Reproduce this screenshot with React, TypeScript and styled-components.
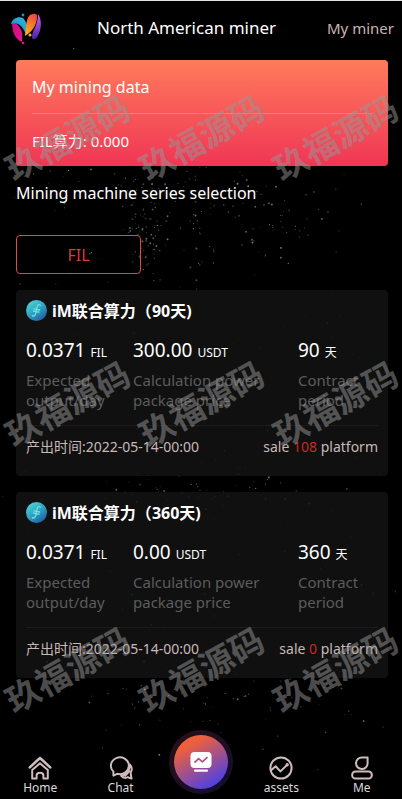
import React from "react";
import styled, { createGlobalStyle } from "styled-components";

const GlobalStyle = createGlobalStyle`
  *, *::before, *::after { box-sizing: border-box; }
  body {
    margin: 0;
    background: #000;
    color: #fff;
    font-family: "Noto Sans", "Noto Sans CJK SC", sans-serif;
  }
  h1, h2, h3, p, dl, dd, dt { margin: 0; font-weight: 400; }
  button { font-family: inherit; }
`;

const Page = styled.div`
  position: relative;
  min-height: 100vh;
  display: flex;
  flex-direction: column;
  overflow: hidden;
  border-top: 1px solid #dfe3e2;
  isolation: isolate;
`;

const Sky = styled.svg`
  position: absolute;
  inset: 0;
  width: 100%;
  height: 100%;
  z-index: -1;
`;

const Header = styled.header`
  display: flex;
  justify-content: space-between;
  align-items: center;
  height: 55px;
  padding: 0 8px 2px 6px;
`;

const HeaderTitle = styled.h1`
  font-size: 17px;
  line-height: 24px;
  white-space: nowrap;
`;

const HeaderLink = styled.a`
  color: #c8b4b4;
  font-size: 15px;
  line-height: 24px;
  text-decoration: none;
  white-space: nowrap;
`;

const Main = styled.main`
  display: flex;
  flex-direction: column;
  padding: 4px 14px 24px 16px;
`;

const DataCard = styled.section`
  height: 106px;
  padding: 0 16px;
  border-radius: 4px;
  background: linear-gradient(180deg, #ff7a5c, #f03655);
`;

const DataTitle = styled.h2`
  height: 54px;
  border-bottom: 1px solid rgba(255, 255, 255, 0.2);
  font-size: 16px;
  line-height: 54px;
`;

const DataValue = styled.p`
  font-size: 15px;
  line-height: 54px;
`;

const SectionTitle = styled.h2`
  margin-top: 15px;
  font-size: 16px;
  line-height: 24px;
`;

const SeriesButton = styled.button`
  align-self: flex-start;
  width: 125px;
  height: 39px;
  margin: 30px 0 16px;
  border: 1px solid #e04a3c;
  border-radius: 4px;
  background: transparent;
  color: #d93c32;
  font-size: 16px;
`;

const CardList = styled.div`
  display: grid;
  gap: 16px;
`;

const Card = styled.article`
  padding: 8px 10px 19px;
  border-radius: 4px;
  background: rgba(19, 19, 19, 0.85);
`;

const CardHead = styled.header`
  display: flex;
  align-items: center;
  gap: 5px;
  height: 25px;
`;

const CardTitle = styled.h3`
  font-size: 16px;
  font-weight: 700;
  line-height: 24px;
`;

const Stats = styled.dl`
  display: grid;
  grid-template-columns: 107px 165px 1fr;
  padding: 14px 0 15px;
  border-bottom: 1px solid #1c1c1c;
`;

const Stat = styled.div`
  display: flex;
  flex-direction: column-reverse;
  justify-content: flex-end;
`;

const StatValue = styled.dd`
  font-size: 19px;
  line-height: 26px;
  white-space: nowrap;
`;

const Unit = styled.small`
  font-size: 12px;
`;

const StatLabel = styled.dt`
  max-width: 140px;
  padding-top: 4px;
  color: #5c5c5c;
  font-size: 15px;
  line-height: 20px;
`;

const CardFoot = styled.footer`
  display: flex;
  justify-content: space-between;
  padding-top: 11px;
  color: #c8b9b9;
  font-size: 14px;
  line-height: 20px;
`;

const Sold = styled.span`
  color: #c92a22;
`;

const TabBar = styled.nav`
  display: grid;
  grid-template-columns: repeat(5, 1fr);
  align-items: end;
  height: 72px;
  margin-top: auto;
  padding-bottom: 3px;
`;

const Tab = styled.a`
  display: flex;
  flex-direction: column;
  align-items: center;
  color: #cfbcbc;
  font-size: 12px;
  line-height: 16px;
  text-decoration: none;
`;

const TabLabel = styled.span`
  color: #dcd8dc;
`;

const MinerTab = styled.a`
  justify-self: center;
  display: grid;
  place-items: center;
  width: 64px;
  height: 64px;
  margin-bottom: 2px;
  border-radius: 50%;
  background: linear-gradient(135deg, #2a1014, #100e30);
`;

const MinerDisc = styled.span`
  display: grid;
  place-items: center;
  width: 54px;
  height: 54px;
  border-radius: 50%;
  background: linear-gradient(150deg, #ee5f3c 22%, #4a40e8 88%);
`;

const Watermarks = styled.div`
  position: absolute;
  inset: 3px 0 0;
  display: grid;
  grid-template-columns: repeat(3, 134px);
  grid-auto-rows: 266px;
  pointer-events: none;
`;

const Mark = styled.span`
  display: grid;
  place-content: center;
  transform: rotate(-29deg);
  color: rgba(150, 150, 150, 0.5);
  font-family: "Noto Sans CJK SC", sans-serif;
  font-size: 34px;
  font-weight: 700;
  line-height: 50px;
  white-space: nowrap;
`;

type Star = { x: number; y: number; r: number; o: number };

function makeStars(): Star[] {
  let seed = 71;
  const rnd = () => {
    seed = (seed * 16807) % 2147483647;
    return seed / 2147483647;
  };
  const stars: Star[] = [];
  const scatter = (n: number, x: number, y: number, w: number, h: number) => {
    for (let i = 0; i < n; i++) {
      stars.push({
        x: x + (rnd() + rnd() - 1) * w,
        y: y + (rnd() + rnd() - 1) * h,
        r: rnd() > 0.8 ? 1 : 0.6,
        o: 0.15 + rnd() * 0.5,
      });
    }
  };
  scatter(280, 50, 52, 60, 50);
  scatter(70, 36, 30, 6, 6);
  scatter(90, 58, 28, 30, 6);
  scatter(60, 35, 23, 35, 4);
  scatter(50, 50, 62, 50, 4);
  scatter(60, 50, 87, 50, 6);
  return stars;
}

const STARS = makeStars();

const Starfield = () => (
  <Sky aria-hidden="true">
    {STARS.map((s, i) => (
      <circle key={i} cx={`${s.x}%`} cy={`${s.y}%`} r={s.r} fill="#b4c2c0" opacity={s.o} />
    ))}
  </Sky>
);

const Logo = () => (
  <svg width="40" height="40" viewBox="0 0 40 40" role="img" aria-label="Logo">
    <defs>
      <linearGradient id="lgBlue" x1="0" y1="1" x2="1" y2="0">
        <stop offset="0" stopColor="#1c7fc0" />
        <stop offset="1" stopColor="#2bc0e4" />
      </linearGradient>
      <linearGradient id="lgPink" x1="0" y1="0" x2="1" y2="1">
        <stop offset="0" stopColor="#c40c86" />
        <stop offset="1" stopColor="#f0128c" />
      </linearGradient>
      <linearGradient id="lgOrange" x1="0.6" y1="0" x2="0.3" y2="1">
        <stop offset="0" stopColor="#ef4b3b" />
        <stop offset="1" stopColor="#fdb515" />
      </linearGradient>
      <linearGradient id="lgViolet" x1="0.5" y1="0" x2="0.5" y2="1">
        <stop offset="0" stopColor="#d266e8" />
        <stop offset="1" stopColor="#4a1fb0" />
      </linearGradient>
    </defs>
    <path d="M6 14 C6 24 9 31 16 34 C16 28 17 24 14 20 C12 16 9 14 6 14 Z" fill="url(#lgPink)" />
    <path d="M5 16 C6 11 12 8 17 10 C20 13 21 17 22 21 L20 26 C17 20 13 13 5 16 Z" fill="url(#lgBlue)" />
    <path d="M23 8 C26 5 32 5 31 9 C31 16 27 23 19 28 C20 20 20 12 23 8 Z" fill="url(#lgOrange)" />
    <path d="M32 6 C36 11 36 22 31 29 C29 32 26 32 26 29 C26 22 32 18 32 6 Z" fill="url(#lgViolet)" />
    <circle cx="17" cy="7" r="1.4" fill="#2092b8" />
    <circle cx="24" cy="27" r="1.5" fill="#fdb515" />
    <circle cx="17" cy="35" r="1.3" fill="#e0128c" />
  </svg>
);

const FilIcon = () => (
  <svg width="21" height="21" viewBox="0 0 21 21" aria-hidden="true">
    <defs>
      <linearGradient id="fil" x1="0.1" y1="0" x2="0.8" y2="1">
        <stop offset="0" stopColor="#52dad8" />
        <stop offset="0.55" stopColor="#2e9dc0" />
        <stop offset="1" stopColor="#2058a0" />
      </linearGradient>
    </defs>
    <circle cx="10.5" cy="10.5" r="10.5" fill="url(#fil)" />
    <path
      d="M14.5 5.2 C12.6 4 11.4 5 11 7.4 L9.8 13.2 C9.3 15.7 8 16.6 6.3 15.6 M8 8.8 L13.6 10 M7.4 11 L13 12.2"
      fill="none"
      stroke="#68e4e2"
      strokeWidth="1.3"
      strokeLinecap="round"
    />
  </svg>
);

const TabIcon = ({ children }: { children: React.ReactNode }) => (
  <svg
    width="24"
    height="24"
    viewBox="0 0 24 24"
    fill="none"
    stroke="currentColor"
    strokeWidth="2"
    strokeLinejoin="round"
    strokeLinecap="round"
    aria-hidden="true"
  >
    {children}
  </svg>
);

const HomeIcon = () => (
  <TabIcon>
    <path d="M1.8 11.4 L12 2 L22.2 11.4" strokeWidth="2.6" />
    <path d="M4.2 14 L12 7.2 L19.8 14 M4.2 14 V22.5 H8.6 V19.4 C8.6 15.8 15.4 15.8 15.4 19.4 V22.5 H19.8 V14" />
  </TabIcon>
);

const ChatIcon = () => (
  <TabIcon>
    <path d="M4.4 19.6 L4.4 15.6 A9 8.4 0 1 1 8.2 17.8 Z" />
    <path d="M20.8 8.4 C22.8 10.4 23.4 13.2 21.8 16.4 C21.4 17.6 22 19.6 22.6 22.6 L18.8 21.2 C16.4 22.4 13.6 21.4 12.2 19.8 C17 19.6 20.8 15 20.8 8.4 Z" />
    <path d="M20.4 15.2 L16.2 19.8" />
  </TabIcon>
);

const AssetsIcon = () => (
  <TabIcon>
    <circle cx="12" cy="12" r="10.6" />
    <path d="M2.4 14 L6.6 10.2 L11.4 15.4 L18 9" />
    <circle cx="18.2" cy="8.8" r="0.7" />
  </TabIcon>
);

const MeIcon = () => (
  <TabIcon>
    <path d="M12 1.5 H17.6 V7.4 A5.8 5.8 0 1 1 12 1.5 Z" />
    <rect x="2.2" y="15.6" width="19.6" height="7" rx="3.2" />
  </TabIcon>
);

const MinerIcon = () => (
  <svg width="22" height="22" viewBox="0 0 22 22" aria-hidden="true">
    <rect x="0.5" y="1" width="21" height="16" rx="4" fill="#fff" />
    <rect x="4" y="18.6" width="14" height="2.2" rx="1" fill="#fff" />
    <path
      d="M5 11.2 L8.6 7.6 L12.4 10.8 L17 6.6"
      fill="none"
      stroke="#b2527c"
      strokeWidth="1.7"
      strokeLinecap="round"
      strokeLinejoin="round"
    />
  </svg>
);

const PLANS = [
  { days: 90, price: "300.00", sold: 108 },
  { days: 360, price: "0.00", sold: 0 },
];

export default function App() {
  return (
    <>
      <GlobalStyle />
      <Page>
        <Starfield />
        <Header>
          <Logo />
          <HeaderTitle>North American miner</HeaderTitle>
          <HeaderLink href="#my-miner">My miner</HeaderLink>
        </Header>
        <Main>
          <DataCard>
            <DataTitle>My mining data</DataTitle>
            <DataValue>FIL算力: 0.000</DataValue>
          </DataCard>
          <SectionTitle>Mining machine series selection</SectionTitle>
          <SeriesButton type="button">FIL</SeriesButton>
          <CardList>
            {PLANS.map((plan) => (
              <Card key={plan.days}>
                <CardHead>
                  <FilIcon />
                  <CardTitle>iM联合算力（{plan.days}天)</CardTitle>
                </CardHead>
                <Stats>
                  <Stat>
                    <StatLabel>Expected output/day</StatLabel>
                    <StatValue>
                      0.0371 <Unit>FIL</Unit>
                    </StatValue>
                  </Stat>
                  <Stat>
                    <StatLabel>Calculation power package price</StatLabel>
                    <StatValue>
                      {plan.price} <Unit>USDT</Unit>
                    </StatValue>
                  </Stat>
                  <Stat>
                    <StatLabel>Contract period</StatLabel>
                    <StatValue>
                      {plan.days} <Unit>天</Unit>
                    </StatValue>
                  </Stat>
                </Stats>
                <CardFoot>
                  <span>产出时间:2022-05-14-00:00</span>
                  <span>
                    sale <Sold>{plan.sold}</Sold> platform
                  </span>
                </CardFoot>
              </Card>
            ))}
          </CardList>
        </Main>
        <TabBar>
          <Tab href="#home">
            <HomeIcon />
            <TabLabel>Home</TabLabel>
          </Tab>
          <Tab href="#chat">
            <ChatIcon />
            <TabLabel>Chat</TabLabel>
          </Tab>
          <MinerTab href="#miner" aria-label="Miner">
            <MinerDisc>
              <MinerIcon />
            </MinerDisc>
          </MinerTab>
          <Tab href="#assets">
            <AssetsIcon />
            <TabLabel>assets</TabLabel>
          </Tab>
          <Tab href="#me">
            <MeIcon />
            <TabLabel>Me</TabLabel>
          </Tab>
        </TabBar>
        <Watermarks aria-hidden="true">
          {Array.from({ length: 9 }, (_, i) => (
            <Mark key={i}>玖福源码</Mark>
          ))}
        </Watermarks>
      </Page>
    </>
  );
}
